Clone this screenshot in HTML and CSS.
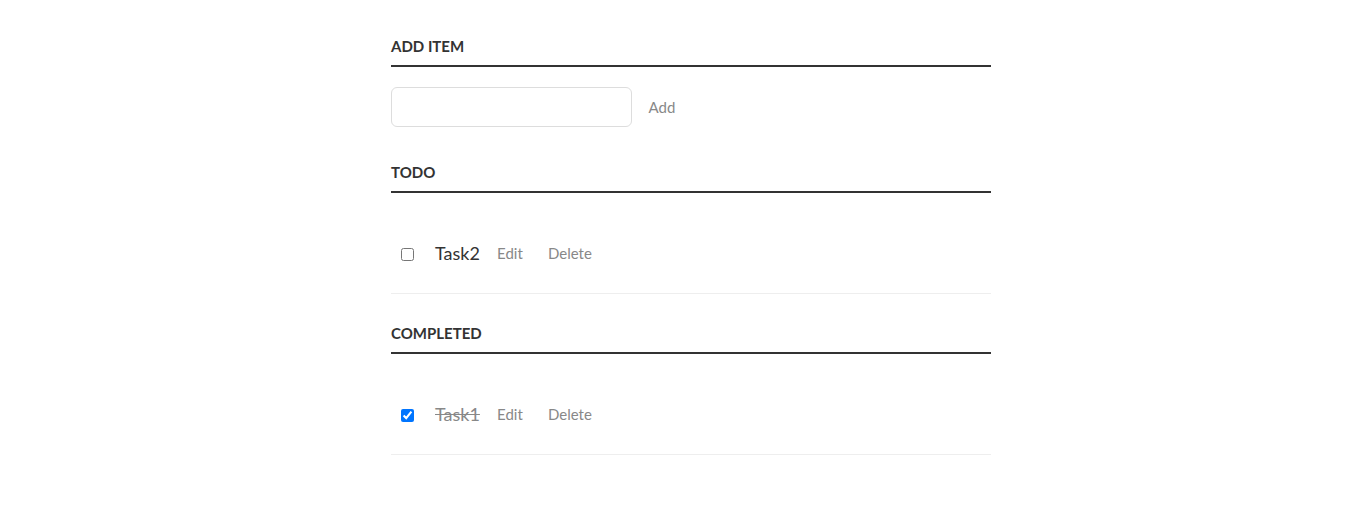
FILE: index.html
```html
<!DOCTYPE html>
<html lang="en">
<head>
<meta charset="utf-8">
<title>Todo</title>
<link rel="stylesheet" href="styles.css">
</head>
<body>
<div class="container">
  <h3 class="heading">Add Item</h3>
  <div class="add-row">
    <input type="text" class="text-input" id="new-task">
    <button class="btn">Add</button>
  </div>
  <h3 class="heading">Todo</h3>
  <ul class="tasks">
    <li class="task">
      <input type="checkbox" class="check">
      <label class="task-label">Task2</label>
      <button class="btn">Edit</button>
      <button class="btn">Delete</button>
    </li>
  </ul>
  <h3 class="heading">Completed</h3>
  <ul class="tasks">
    <li class="task done">
      <input type="checkbox" class="check" checked>
      <label class="task-label">Task1</label>
      <button class="btn">Edit</button>
      <button class="btn">Delete</button>
    </li>
  </ul>
</div>
</body>
</html>
```
FILE: styles.css
```css
html, body {
  margin: 0;
  padding: 0;
  background: #fff;
}
body {
  font-family: Lato, "Open Sans", sans-serif;
  color: #333;
  padding-left: 10px;
}
.container {
  width: 600px;
  margin: 0 auto;
  padding-top: 7px;
}
.heading {
  margin: 0;
  padding: 30px 0 10px;
  font-size: 15px;
  line-height: 18px;
  font-weight: 700;
  color: #333;
  text-transform: uppercase;
  border-bottom: 2px solid #333;
}
.add-row {
  display: flex;
  align-items: center;
  margin: 20px 0 6px;
}
.text-input {
  box-sizing: content-box;
  width: 219px;
  height: 18px;
  margin: 0;
  padding: 10px;
  font-size: 18px;
  line-height: 18px;
  font-family: Lato, sans-serif;
  color: #888;
  border: 1px solid #ddd;
  border-radius: 6px;
  background: #fff;
  outline: none;
}
.btn {
  width: 60px;
  padding: 0;
  margin: 0;
  background: none;
  border: 0;
  color: #888;
  font-size: 15px;
  line-height: 20px;
  font-family: Lato, sans-serif;
  cursor: pointer;
  text-align: center;
}
.tasks {
  margin: 0;
  padding: 0;
  list-style: none;
}
.task {
  display: flex;
  align-items: center;
  height: 40px;
  padding: 40px 0 20px;
  border-bottom: 1px solid #eee;
}
.check {
  width: 13px;
  height: 13px;
  margin: 2px 10px 0;
}
.task-label {
  font-size: 18px;
  line-height: 40px;
  padding-left: 11px;
  color: #333;
}
.done .task-label {
  color: #888;
  text-decoration: line-through;
}
```
